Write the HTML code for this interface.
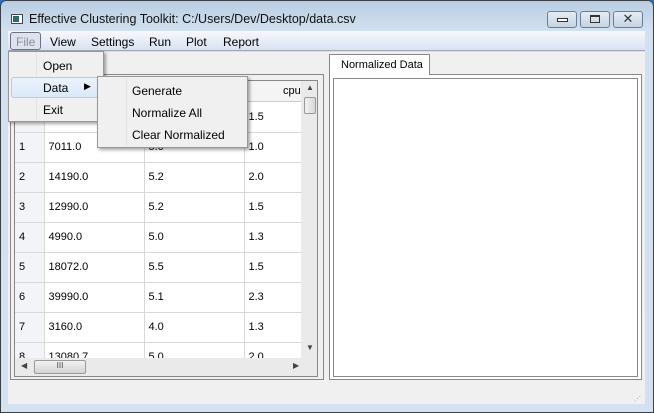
<!DOCTYPE html>
<html><head><meta charset="utf-8"><style>
*{margin:0;padding:0;box-sizing:border-box}
body{width:654px;height:413px;overflow:hidden;background:#2a78c0;font-family:"Liberation Sans",sans-serif;font-size:12px;color:#000;position:relative}
.a{position:absolute}
.btn{position:absolute;top:11px;height:17px;border:1px solid #6d7d96;border-radius:3px;background:linear-gradient(#e4ecf5,#c5d3e3)}
td{border-right:1px solid #d8d8d8;border-bottom:1px solid #d8d8d8;height:30px;padding-left:4px;font-size:11px}
</style></head><body>
<div class="a" style="left:0;top:0;width:654px;height:413px;border:1px solid #3a3f48;border-radius:6px 6px 0 0;background:linear-gradient(#b9cde2,#d2e1f0 30px,#d3e1f0)"></div>
<div class="a" style="left:11px;top:14px;width:12px;height:10px;border:1px solid #445;background:#fff"><div style="margin:1px;width:6px;height:6px;background:#2d6a6a"></div></div>
<div class="a" style="left:29px;top:12px;font-size:12.5px;color:#111">Effective Clustering Toolkit: C:/Users/Dev/Desktop/data.csv</div>
<div class="btn" style="left:547px;width:30px"><div style="margin:6px auto;width:11px;height:4px;border:1px solid #333;background:#fff"></div></div>
<div class="btn" style="left:580px;width:30px"><div style="margin:3px auto;width:10px;height:8px;border:1px solid #333;border-top-width:2px"></div></div>
<div class="btn" style="left:613px;width:30px;text-align:center;font-size:13px;line-height:14px;color:#333">✕</div>
<div class="a" style="left:8px;top:31px;width:637px;height:20px;background:linear-gradient(#f6f8fc,#dae2f2);border-bottom:1px solid #a0a8b8"></div>
<div class="a" style="left:10px;top:32px;width:31px;height:18px;border:1px solid #6c7280;border-radius:3px;background:#dde3ee"></div>
<div class="a" style="left:16px;top:35px;color:#8a8f98">File</div>
<div class="a" style="left:50px;top:35px">View</div>
<div class="a" style="left:91px;top:35px">Settings</div>
<div class="a" style="left:149px;top:35px">Run</div>
<div class="a" style="left:186px;top:35px">Plot</div>
<div class="a" style="left:223px;top:35px">Report</div>
<div class="a" style="left:8px;top:52px;width:637px;height:352px;background:#f0f0f0"></div>
<div class="a" style="left:8px;top:404px;width:637px;height:4px;background:#d3e1f0"></div>
<!-- left panel -->
<div class="a" style="left:10px;top:74px;width:314px;height:306px;border:1px solid #888"></div>
<div class="a" style="left:14px;top:80px;width:304px;height:297px;border:1px solid #888;background:#fff;overflow:hidden">
<div class="a" style="left:0;top:0;width:287px;height:21px;background:#f4f4f4;border-bottom:1px solid #ccc"></div>
<div class="a" style="left:268px;top:4px;font-size:11px">cpu</div>
<table class="a" style="left:0;top:21px;border-collapse:collapse;width:287px">
<tr><td style="width:29px;background:#f2f4f7"></td><td style="width:100px"></td><td style="width:100px"></td><td>1.5</td></tr>
<tr><td style="background:#f2f4f7">1</td><td>7011.0</td><td>5.0</td><td>1.0</td></tr>
<tr><td style="background:#f2f4f7">2</td><td>14190.0</td><td>5.2</td><td>2.0</td></tr>
<tr><td style="background:#f2f4f7">3</td><td>12990.0</td><td>5.2</td><td>1.5</td></tr>
<tr><td style="background:#f2f4f7">4</td><td>4990.0</td><td>5.0</td><td>1.3</td></tr>
<tr><td style="background:#f2f4f7">5</td><td>18072.0</td><td>5.5</td><td>1.5</td></tr>
<tr><td style="background:#f2f4f7">6</td><td>39990.0</td><td>5.1</td><td>2.3</td></tr>
<tr><td style="background:#f2f4f7">7</td><td>3160.0</td><td>4.0</td><td>1.3</td></tr>
<tr><td style="background:#f2f4f7">8</td><td>13080.7</td><td>5.0</td><td>2.0</td></tr>
</table>
<div class="a" style="left:286px;top:0;width:17px;height:296px;background:#eaeaea"></div>
<div class="a" style="left:289px;top:16px;width:12px;height:17px;border:1px solid #999;border-radius:2px;background:linear-gradient(90deg,#f2f2f2,#d8d8d8)"></div>
<div class="a" style="left:291px;top:2px;font-size:8px;color:#444">▲</div>
<div class="a" style="left:291px;top:262px;font-size:8px;color:#444">▼</div>
<div class="a" style="left:0;top:277px;width:287px;height:18px;background:#eaeaea"></div>
<div class="a" style="left:19px;top:279px;width:52px;height:14px;border:1px solid #999;border-radius:2px;background:linear-gradient(#f2f2f2,#d4d4d4);font-size:8px;text-align:center;color:#444">III</div>
<div class="a" style="left:6px;top:280px;font-size:8px;color:#444">◀</div>
<div class="a" style="left:278px;top:280px;font-size:8px;color:#444">▶</div>
</div>
<!-- right panel -->
<div class="a" style="left:329px;top:74px;width:313px;height:306px;border:1px solid #888;background:#fff"></div>
<div class="a" style="left:333px;top:78px;width:305px;height:299px;border:1px solid #888"></div>
<div class="a" style="left:329px;top:54px;width:101px;height:21px;border:1px solid #888;border-bottom:none;background:#fff;font-size:11px;padding:4px 0 0 11px">Normalized Data</div>
<!-- menus -->
<div class="a" style="left:8px;top:51px;width:96px;height:71px;border:1px solid #979797;background:#f0f0f0;box-shadow:2px 2px 3px rgba(0,0,0,.35)"></div>
<div class="a" style="left:36px;top:53px;width:1px;height:67px;background:#e2e3e3"></div>
<div class="a" style="left:11px;top:77px;width:89px;height:21px;border:1px solid #a8d0f0;border-radius:3px;background:linear-gradient(#eaf3fc,#dbe9f8)"></div>
<div class="a" style="left:43px;top:59px">Open</div>
<div class="a" style="left:43px;top:81px">Data</div>
<div class="a" style="left:84px;top:81px;font-size:9px">▶</div>
<div class="a" style="left:43px;top:103px">Exit</div>
<div class="a" style="left:97px;top:76px;width:151px;height:72px;border:1px solid #979797;background:#f0f0f0;box-shadow:2px 2px 3px rgba(0,0,0,.35)"></div>
<div class="a" style="left:126px;top:78px;width:1px;height:68px;background:#e2e3e3"></div>
<div class="a" style="left:132px;top:84px">Generate</div>
<div class="a" style="left:132px;top:106px">Normalize All</div>
<div class="a" style="left:132px;top:128px">Clear Normalized</div>
<div class="a" style="left:634px;top:395px;font-size:7px;color:#999">⋰</div>
</body></html>
